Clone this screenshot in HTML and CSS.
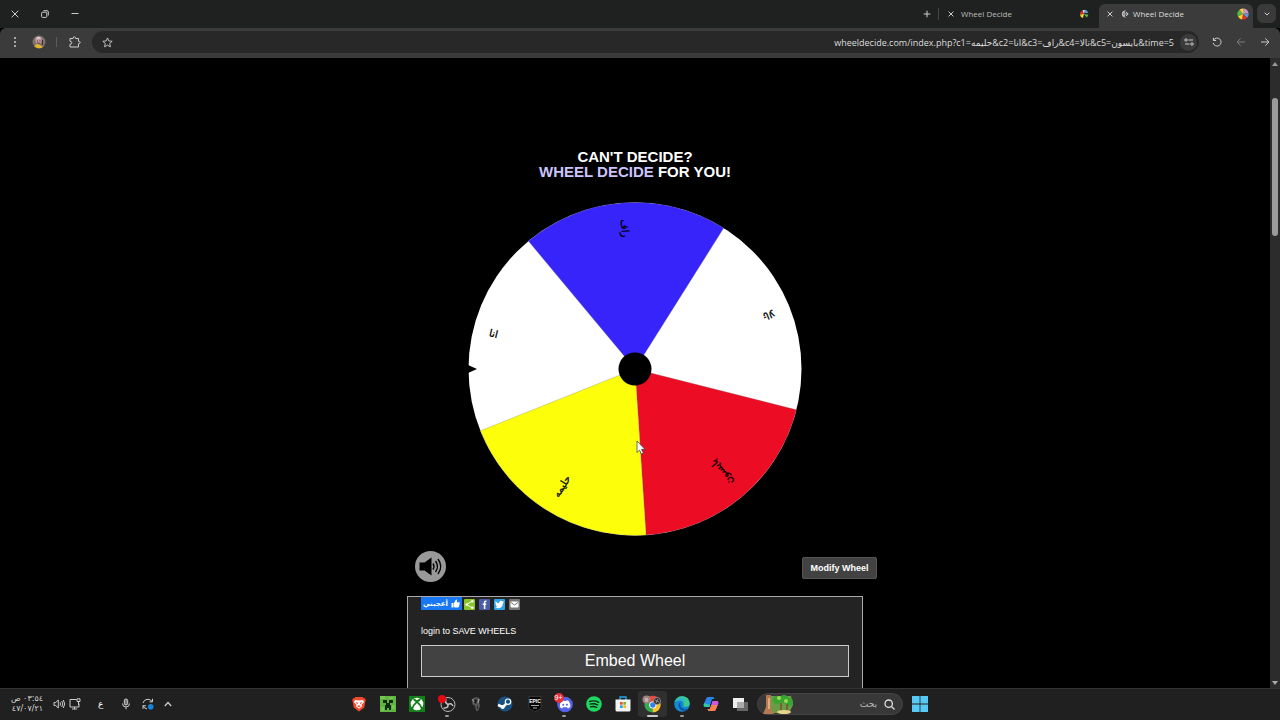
FILE: index.html
```html
<!DOCTYPE html>
<html lang="en">
<head>
    <meta charset="UTF-8">
    <meta name="viewport" content="width=device-width, initial-scale=1.0">
    <title>Wheel Decide</title>
    <link rel="stylesheet" href="styles.css">
</head>
<body>
    <!-- Tab strip -->
    <header class="tabstrip">
        <div class="window-buttons">
            <button aria-label="Close"><svg width="8" height="8" viewBox="0 0 8 8"><path d="M.7.7l6.600 6.600M7.300.7L.7 7.300"/></svg></button>
            <button aria-label="Restore"><svg width="8" height="8" viewBox="0 0 8 8"><rect x=".6" y="2.200" width="5.200" height="5.200" rx="1"/><path d="M2.500.7H6a1.300 1.300 0 0 1 1.300 1.300v3.500"/></svg></button>
            <button aria-label="Minimize"><svg width="8" height="8" viewBox="0 0 8 8"><path d="M.5 3.500h7"/></svg></button>
        </div>
        <div class="tabs">
            <button class="new-tab" aria-label="New tab"><svg width="8" height="8" viewBox="0 0 8 8"><path d="M4 .7v6.600M.7 4h6.600"/></svg></button>
            <div class="tab">
                <button aria-label="Close tab"><svg width="6" height="6" viewBox="0 0 6 6"><path d="M.6.6l4.800 4.800M5.400.6L.6 5.400"/></svg></button>
                <span class="tab-title">Wheel Decide</span>
                <svg class="favicon" width="10" height="10" viewBox="0 0 10 10">
                    <path class="f-red" d="M5 5L1 5A4 4 0 0 1 3 1.500z"/>
                    <path class="f-yellow" d="M5 5L1 5.500A4 4 0 0 0 4 9z"/>
                    <path class="f-white" d="M5 5L3.500 1.200A4 4 0 0 1 6 1z"/>
                    <path class="f-blue" d="M5 4L6 .8A4.500 4.500 0 0 1 9.300 4z"/>
                    <path class="f-green" d="M5 5l4.300.4A4.500 4.500 0 0 1 7.500 8.500z"/>
                </svg>
            </div>
            <div class="tab active">
                <button aria-label="Close tab"><svg width="6" height="6" viewBox="0 0 6 6"><path d="M.6.6l4.800 4.800M5.400.6L.6 5.400"/></svg></button>
                <svg class="line-icon" width="9" height="8" viewBox="0 0 9 8"><path d="M5.500.8A3.200 3.200 0 1 0 5.500 7.200M3 4h5M6 2l2.200 2L6 6M3 2.600h2M3 5.400h2"/></svg>
                <span class="tab-title">Wheel Decide</span>
                <svg class="favicon" width="12" height="12" viewBox="0 0 12 12">
                    <path class="f-green" d="M6 6L1 8.500A5.500 5.500 0 0 1 2.500 1.800z"/>
                    <path class="f-yellow" d="M6 6L2.500 1.800A5.500 5.500 0 0 1 6 .5z"/>
                    <path class="f-pink" d="M6 6V.5A5.500 5.500 0 0 1 11.500 5z"/>
                    <path class="f-blue" d="M6 6l5.500-1A5.500 5.500 0 0 1 10 10z"/>
                    <path class="f-red" d="M6 6l4 4A5.500 5.500 0 0 1 5 11.400z"/>
                    <path class="f-yellow" d="M6 6L5 11.400A5.500 5.500 0 0 1 1 8.500z"/>
                </svg>
            </div>
            <button class="tab-search" aria-label="Search tabs"><svg width="6" height="4" viewBox="0 0 6 4"><path d="M.7.7L3 3 5.300.7"/></svg></button>
        </div>
    </header>

    <!-- Address bar -->
    <nav class="toolbar">
        <button aria-label="Menu"><svg class="solid" width="4" height="12" viewBox="0 0 4 12"><circle cx="2" cy="2" r="1"/><circle cx="2" cy="6" r="1"/><circle cx="2" cy="10" r="1"/></svg></button>
        <button class="profile" aria-label="Profile">
            <svg width="14" height="14" viewBox="0 0 14 14">
                <circle cx="7" cy="7" r="6.500" fill="#82706f" stroke="none"/>
                <path d="M2.500 11.500Q4 8 7 9.500T11 12A6.500 6.500 0 0 1 2.500 11.500z" fill="#e0b52c" stroke="none"/>
                <circle cx="6.500" cy="5.500" r="3" fill="#c79aa0" stroke="none"/>
                <path d="M3 4.500Q6-.5 10 4L8.500 3.500H5z" fill="#ddd" stroke="none"/>
                <path d="M10.500 5v5M5 6h1M7.500 6h1M5.500 8h2" stroke="#38302f"/>
            </svg>
        </button>
        <span class="divider"></span>
        <button aria-label="Extensions"><svg width="12" height="12" viewBox="0 0 12 12"><path d="M1 2.500h3Q4 .8 5.300.8T6.600 2.500H9.500V5.300Q11.200 5.300 11.200 6.500T9.500 7.700V11H1V8.200Q2.800 8 2.800 6.700T1 5.200z"/></svg></button>
        <div class="omnibox">
            <button aria-label="Bookmark"><svg width="11" height="11" viewBox="0 0 12 12"><path d="M6 1l1.500 3.300 3.600.4-2.700 2.400.8 3.600L6 8.900l-3.200 1.800.8-3.600L.9 4.700l3.600-.4z"/></svg></button>
            <input type="text" dir="ltr" aria-label="Address" value="wheeldecide.com/index.php?c1=حليمه&amp;c2=انا&amp;c3=راف&amp;c4=تالا&amp;c5=بايسون&amp;time=5">
            <button class="site-info" aria-label="Site information"><svg width="10" height="8" viewBox="0 0 10 8"><circle cx="2" cy="2" r="1.200"/><path d="M4.500 2H9M1 6h4.500"/><circle cx="8" cy="6" r="1.200"/></svg></button>
        </div>
        <button aria-label="Reload"><svg width="10" height="10" viewBox="0 0 10 10"><path d="M1.500 3.300A4 4 0 1 1 1.200 6M1.400.8v2.700h2.700"/></svg></button>
        <button class="dim" aria-label="Forward"><svg width="10" height="10" viewBox="0 0 10 10"><path d="M9 5H1.200M4.700 1.400L1.100 5l3.600 3.600"/></svg></button>
        <button aria-label="Back"><svg width="10" height="10" viewBox="0 0 10 10"><path d="M1 5h7.800M5.300 1.400L8.900 5 5.300 8.600"/></svg></button>
    </nav>

    <!-- Page -->
    <div class="viewport">
        <main class="page">
            <h1>CAN'T DECIDE?<br><a href="#">WHEEL DECIDE</a> FOR YOU!</h1>

            <svg class="wheel" viewBox="-167 -167 334 334" role="img" aria-label="Wheel">
                <circle r="166.500" fill="#fff"/>
                <path class="slice" fill="#3624fb" d="M0 0L-106.600-127.900A166.500 166.500 0 0 1 88.700-140.900z"/>
                <path class="slice" fill="#ec0c24" d="M0 0L161.400 40.800A166.500 166.500 0 0 1 11 166.100z"/>
                <path class="slice" fill="#fdff0a" d="M0 0L11 166.100A166.500 166.500 0 0 1-154.600 61.800z"/>
                <circle r="16.500" fill="#000"/>
                <path d="M-167-4L-158 0L-167 4z" fill="#000"/>
                <text x="-150" y="4" transform="rotate(14.200)">انا</text>
                <text x="-150" y="4" transform="rotate(86.200)">راف</text>
                <text x="-150" y="4" transform="rotate(158.200)">تالا</text>
                <text x="-150" y="4" transform="rotate(230.200)">بايسون</text>
                <text x="-150" y="4" transform="rotate(302.200)">حليمه</text>
                <path class="cursor" d="M2 72v11.500l2.600-2.400 1.800 4 2-.9-1.800-3.900H10z"/>
            </svg>

            <div class="wheel-actions">
                <button class="sound" aria-label="Sound">
                    <svg width="31" height="31" viewBox="0 0 31 31">
                        <circle cx="15.500" cy="15.500" r="15.500" fill="#999"/>
                        <path d="M4.500 11.500h5l7-5v18l-7-5h-5z" fill="#000"/>
                        <path d="M18 12.500q2 3 0 6M20.500 10q4 5.500 0 11M23 8q5.500 7.500 0 15" fill="none" stroke="#000" stroke-width="1.400"/>
                    </svg>
                </button>
                <button class="modify">Modify Wheel</button>
            </div>

            <section class="panel">
                <div class="share">
                    <button class="like" dir="rtl"><svg width="9" height="9" viewBox="0 0 9 9"><path fill="#fff" d="M.5 4h2v4.500h-2zM3 4l2-3.500c1.300 0 1.300 1 .8 2.800h2.500c.6.2.6 1 .2 1.300.3.500.2 1-.2 1.200.2.600 0 1-.3 1.200.1.700-.2 1.500-1 1.500H4L3 8z"/></svg><span>أعجبني</span></button>
                    <a class="share-green" href="#" aria-label="Share"><svg width="11" height="11" viewBox="0 0 11 11"><path d="M8.500 2L2.500 5.500l6 3.500" fill="none" stroke="#fff"/><g fill="#fff"><circle cx="8.300" cy="2.200" r="1.300"/><circle cx="2.700" cy="5.500" r="1.300"/><circle cx="8.300" cy="8.800" r="1.300"/></g></svg></a>
                    <a class="share-facebook" href="#" aria-label="Facebook"><svg width="11" height="11" viewBox="0 0 11 11"><path d="M7.500 2.200H6.600q-1 0-1 1V10M3.700 5.300h3.500" fill="none" stroke="#fff" stroke-width="1.500"/></svg></a>
                    <a class="share-twitter" href="#" aria-label="Twitter"><svg width="11" height="11" viewBox="0 0 11 11"><path fill="#fff" d="M1.500 2.200q1.700 1.900 3.800 2c-.3-2.600 2.200-3 3.100-1.700l1.300-.4-.7 1.200.9-.1-1 1C9 8.300 4.800 10.500 1.200 8.500q1.500 0 2.300-.8-1.300-.2-1.600-1.300h.8Q1.400 5.900 1.400 4.500l.7.200Q.9 3.500 1.500 2.200z"/></svg></a>
                    <a class="share-mail" href="#" aria-label="Email"><svg width="11" height="11" viewBox="0 0 11 11"><rect x="1.500" y="2.500" width="8" height="6" rx="1" fill="#fff"/><path d="M2 3.500l3.500 2.500L9 3.500" fill="none" stroke="#777"/></svg></a>
                </div>
                <p class="login"><a href="#">login</a> to SAVE WHEELS</p>
                <button class="embed">Embed Wheel</button>
            </section>
        </main>
        <div class="scrollbar" aria-hidden="true">
            <span class="arrow-up"></span>
            <span class="thumb"></span>
            <span class="arrow-down"></span>
        </div>
    </div>

    <!-- Taskbar -->
    <footer class="taskbar">
        <div class="tray">
            <time class="clock" dir="rtl">٠٣:٥٤ ص<br>٤٧/٠٧/٢١</time>
            <svg width="12" height="12" viewBox="0 0 12 12"><path d="M1 4.500h1.700L5.300 2v8L2.700 7.500H1zM7 4.300q1.200 1.700 0 3.400M8.700 3q2.200 3 0 6M10.300 2q2.800 4 0 8"/></svg>
            <svg class="network" width="12" height="12" viewBox="0 0 12 12"><path d="M7.500 1.500H1v7.500h9V5.500M3 11h5M5.500 9v2M9.500 3.500V7M8 .8h3v2.700H8z"/></svg>
            <span class="language">ع</span>
            <svg width="12" height="12" viewBox="0 0 12 12"><rect x="4.300" y="1" width="3.400" height="6" rx="1.700" fill="#777"/><path d="M2.500 5.500q0 3.500 3.500 3.500t3.500-3.500M6 9v2.300"/></svg>
            <svg class="update" width="12" height="12" viewBox="0 0 12 12"><path d="M1 5A5 5 0 0 1 10 3.500M10.500.8v3h-3M1 7.500a5 5 0 0 0 4 3.400M1 10.800v-3h3"/><circle cx="8.700" cy="8.700" r="2.800" fill="#1683d8" stroke="none"/></svg>
            <svg width="8" height="12" viewBox="0 0 8 12"><path d="M.8 8L4 4.500 7.200 8" stroke-width="1.300"/></svg>
        </div>

        <div class="dock">
            <div class="apps">
                <button aria-label="Brave"><svg width="16" height="16" viewBox="0 0 16 16"><path fill="#f4482c" d="M4.500 1h7l1.300 1.300 1.200-.1.800 2.500-.6 1.500-.9 5.300L8 15.500l-5.300-4-.9-5.300-.6-1.500.8-2.500 1.200.1z"/><path fill="#fff" d="M4 4l4 .6L12 4l1 2.200-2.500 2.600.5 1.500-3 2.500-3-2.500.5-1.500L3 6.200z"/><path fill="#f4482c" d="M4.500 6l2.500.8-.5 1.700zM11.500 6L9 6.800l.5 1.700zM6 10l2-.8 2 .8-2 1.300z"/></svg></button>
                <button aria-label="Minecraft"><svg width="16" height="16" viewBox="0 0 16 16"><path fill="#62b545" d="M0 0h16v16H0z"/><path fill="#75c84f" d="M0 0h5v3H0zM9 1h4v2H9zM1 11h3v4H1zM12 9h3v4h-3z"/><path fill="#102b10" d="M3 4h4v3H3zM9 4h4v3H9zM6 7h4v2h1v5H9v-2H7v2H5V9h1z"/></svg></button>
                <button aria-label="Xbox"><svg width="16" height="16" viewBox="0 0 16 16"><path fill="#118018" d="M0 0h16v16H0z"/><circle cx="8" cy="8" r="6.300" fill="#fff"/><path fill="none" stroke="#118018" stroke-width="1.600" d="M3 13.500Q4 9 8 5.800q4 3.200 5 7.700"/><path fill="#118018" d="M4 2.500Q6 2.500 8 4.200 10 2.500 12 2.500L11 5 8 6.500 5 5z"/></svg></button>
                <button class="running" aria-label="OBS"><svg width="20" height="18" viewBox="0 0 20 18"><circle cx="11" cy="9.500" r="7" fill="#202022" stroke="#b9b9b9"/><path d="M11 9.500Q7.500 8 9 4.300M11 9.500q.5 3.800-4.500 3.500M11 9.500q3-2.300 5 1.500" fill="none" stroke="#c6c6c6" stroke-width="1.500"/><circle cx="5" cy="4" r="4" fill="#e50914"/></svg></button>
                <button aria-label="Game"><svg width="12" height="16" viewBox="0 0 12 16"><path fill="#555" d="M3 2l4-1 3 2-1 3 1 4-2 5H6L5 10 2 8z"/><path fill="#171717" d="M5 3l2 1-1 4-2-2zM7 9l1 2-1 3z"/><path d="M2 3l2 3M9 3l-1 4" fill="none" stroke="#aaa"/></svg></button>
                <button aria-label="Steam"><svg width="16" height="16" viewBox="0 0 16 16"><circle cx="8" cy="8" r="7.500" fill="#175182"/><path d="M1 9l5 2 5-5" fill="none" stroke="#fff" stroke-width="2.500"/><circle cx="11" cy="5.700" r="2.700" fill="#175182" stroke="#fff" stroke-width="1.200"/><circle cx="5.700" cy="11" r="2" fill="#fff"/></svg></button>
                <button aria-label="Epic Games"><svg width="14" height="16" viewBox="0 0 14 16"><path fill="#050505" stroke="#555" stroke-width=".5" d="M1 .5h12v12L7 15.500l-6-3z"/><text x="7" y="7" class="epic-name">EPIC</text><path d="M3 9.500h8M5 12h4" stroke="#aaa"/></svg></button>
                <button class="running" aria-label="Discord"><svg width="18" height="18" viewBox="0 0 18 18"><circle cx="10" cy="9.500" r="7.800" fill="#5662e8"/><path fill="#fff" d="M6.500 6l2-.8.600.8h2l.6-.8 2 .8q2 3 1.700 6l-2.500 1.400-.8-1.200H8l-.8 1.200L4.800 12Q4.500 9 6.500 6z"/><g fill="#5662e8"><circle cx="8.300" cy="9.700" r="1"/><circle cx="11.900" cy="9.700" r="1"/></g></svg><span class="badge">9+</span></button>
                <button aria-label="Spotify"><svg width="16" height="16" viewBox="0 0 16 16"><circle cx="8" cy="8" r="7.800" fill="#20d760"/><path d="M3.500 5.500q5-1.400 9.300.8M4 8.200q4.300-1.200 7.800.8M4.500 10.800q3.500-.9 6.300.7" fill="none" stroke="#102b18" stroke-width="1.300" stroke-linecap="round"/></svg></button>
                <button aria-label="Microsoft Store"><svg width="16" height="16" viewBox="0 0 16 16"><path d="M5 4V1h6v3" fill="none" stroke="#21a7ed" stroke-width="1.300"/><path fill="#f1f3f5" d="M.5 3.500h15V14q0 1.500-1.500 1.500H2Q.5 15.500.5 14z"/><path fill="#ef512f" d="M5 6h2.700v2.700H5z"/><path fill="#79b928" d="M8.300 6H11v2.700H8.300z"/><path fill="#20a3ec" d="M5 9.300h2.700V12H5z"/><path fill="#f7b719" d="M8.300 9.300H11V12H8.300z"/></svg></button>
                <button class="running current" aria-label="Chrome"><svg width="20" height="18" viewBox="0 0 20 18"><path fill="#e6483b" d="M10.500 9L3.500 6A7.500 7.500 0 0 1 18 7z"/><path fill="#fac32d" d="M10.500 9l7.300-2.500A7.600 7.600 0 0 1 10 17.300z"/><path fill="#36a852" d="M10.500 9l.3 8.300A7.600 7.600 0 0 1 3.500 6z"/><circle cx="10.800" cy="10" r="3.600" fill="#fff"/><circle cx="10.800" cy="10" r="2.700" fill="#3180ed"/><circle cx="4.500" cy="4.500" r="4" fill="#9a8380"/><path d="M2.500 4q2-3 4 0l-1 3h-2z" fill="#c7b3b1"/><circle cx="15" cy="6" r="3.500" fill="#292929" stroke="#aaa" stroke-width=".7"/><path d="M13 5l4 2M16 4l-2 4" stroke="#999"/></svg></button>
                <button class="running" aria-label="Edge"><svg width="16" height="16" viewBox="0 0 16 16"><circle cx="8" cy="8" r="7.800" fill="#1689d5"/><path fill="#3bc98c" d="M.5 6Q3-.3 9 .3q6 .7 6.800 7Q15.500 11 11 10.800q-2-.2-1.500-1.500Q10.500 5 6 4.500 2.500 4 .5 6z"/><path fill="#2db1e2" d="M.5 6Q4 1 9 2.500q2.300 1 2 3.500Q6.500 2.500.5 6z"/><path fill="#0c55a4" d="M5 7q-2 5 3 7.500 3.500 1 6-2Q8.500 14 6.500 10q-.6-2 .5-3.500z"/></svg></button>
                <button aria-label="Copilot"><svg width="16" height="16" viewBox="0 0 16 16"><path fill="#2684ed" d="M5 1h5q1 0 1.500 2H9L6.500 11H2Q0 11 .8 8L3 3q.5-2 2-2z"/><path fill="#35c69c" d="M1 7l-.3 2q0 2 2 2h3.800L7 9z"/><path fill="#c75be1" d="M11 15H6q-1 0-1.500-2H7l2.500-8H14q2 0 1.200 3L13 13q-.5 2-2 2z"/><path fill="#f58349" d="M4.500 13H7l1.200-4h6.500L13 13q-.5 2-2 2H6q-1 0-1.500-2z"/></svg></button>
                <button aria-label="Task view"><svg width="17" height="15" viewBox="0 0 17 15"><path fill="#666" d="M5 5h11v9H5z"/><path fill="#eee" d="M1 1h11v10H1z"/><path fill="#aaa" d="M5 5h7v6H5z"/></svg></button>
            </div>
            <div class="search">
                <svg width="31" height="19" viewBox="0 0 31 19">
                    <path fill="#699c45" d="M9 1h20l2 9-4 8H7z"/>
                    <path fill="#b77952" d="M4 0h5v13l3 6H1l3-7z"/>
                    <path fill="#e0ab80" d="M6 3h2v11H6z"/>
                    <g fill="#36a631"><circle cx="15" cy="5" r="4"/><circle cx="22" cy="4" r="4"/><circle cx="27" cy="7" r="4"/></g>
                    <g fill="#a0d850"><circle cx="17" cy="3" r="2"/><circle cx="24" cy="6" r="2"/></g>
                    <path d="M19 8v7M25 9v6" stroke="#79502f" stroke-width="1.500"/>
                    <ellipse cx="22" cy="17" rx="7" ry="2" fill="#e5d58c"/>
                </svg>
                <input type="search" dir="rtl" placeholder="بحث" aria-label="بحث">
                <svg width="11" height="11" viewBox="0 0 11 11"><circle cx="4.700" cy="4.700" r="3.700" fill="none" stroke="#ddd" stroke-width="1.300"/><path d="M7.500 7.500l3 3" stroke="#ddd" stroke-width="1.300"/></svg>
            </div>
            <button class="start" aria-label="Start"><svg width="16" height="16" viewBox="0 0 16 16"><path fill="#58c9f5" d="M0 0h7.600v7.600H0zM8.400 0H16v7.600H8.400zM0 8.400h7.600V16H0zM8.400 8.400H16V16H8.400z"/></svg></button>
        </div>
    </footer>
</body>
</html>
```

FILE: styles.css
```css
/* Global */
* {
    box-sizing: border-box;
}
body {
    margin: 0;
    height: 100vh;
    display: flex;
    flex-direction: column;
    overflow: hidden;
    background: #000;
    color: #fff;
    font-family: "Liberation Sans", Arial, "DejaVu Sans", sans-serif;
}
button {
    display: flex;
    align-items: center;
    justify-content: center;
    padding: 0;
    border: 0;
    background: none;
    color: inherit;
    font-family: inherit;
    cursor: pointer;
}
input {
    min-width: 0;
    padding: 0;
    border: 0;
    outline: 0;
    background: none;
    color: inherit;
}
svg {
    display: block;
    flex: none;
}

/* Tab strip */
.tabstrip {
    display: flex;
    flex: none;
    justify-content: space-between;
    height: 28px;
    padding: 0 4px 0 0;
    background: #1f2120;
}
.tabstrip svg,
.toolbar svg,
.tray svg {
    fill: none;
    stroke: #ccc;
}
.window-buttons {
    display: flex;
    padding-bottom: 1px;
}
.window-buttons button {
    width: 30px;
}
.tabs {
    display: flex;
    align-items: center;
    padding-bottom: 1px;
}
.new-tab {
    width: 23px;
}
.tab {
    display: flex;
    align-items: center;
    gap: 7px;
    width: 161px;
    height: 12px;
    padding: 0 10px 0 9px;
    border-left: 1px solid #444;
    color: #bbb;
    font-family: "Open Sans", sans-serif;
    font-size: 8px;
}
.tab-title {
    flex: 1;
}
.tab.active {
    align-self: flex-end;
    gap: 4px;
    width: 154px;
    height: 24px;
    margin-bottom: -1px;
    padding: 0 4px 5px 8px;
    border: 0;
    border-radius: 6px 6px 0 0;
    background: #3b3b3b;
    color: #ddd;
}
.tab.active .line-icon {
    margin-left: 3px;
}
.tab .favicon {
    stroke: none;
}
.f-red { fill: #e9292b; }
.f-yellow { fill: #f5d62d; }
.f-white { fill: #eee; }
.f-blue { fill: #6298d8; }
.f-green { fill: #5bb63d; }
.f-pink { fill: #cf94be; }
.tab-search {
    width: 19px;
    height: 19px;
    margin-left: 4px;
    border-radius: 6px;
    background: #3a3a3a;
}

/* Toolbar */
.toolbar {
    display: flex;
    flex: none;
    align-items: center;
    height: 30px;
    padding: 0 3px 2px 0;
    border-radius: 6px 6px 0 0;
    background: #3b3b3b;
}
.toolbar > button {
    width: 24px;
}
.toolbar > button:first-child {
    width: 29px;
}
.toolbar > .profile {
    width: 20px;
}
.toolbar .solid {
    fill: #ccc;
    stroke: none;
}
.toolbar .dim {
    opacity: 0.45;
}
.divider {
    width: 1px;
    height: 10px;
    margin: 0 6px 0 7px;
    background: #5b5b5b;
}
.omnibox {
    display: flex;
    flex: 1;
    align-items: center;
    height: 22px;
    margin: 0 6px 0 5px;
    padding: 0 2px 0 10px;
    border-radius: 11px;
    background: #282828;
}
.omnibox input {
    flex: 1;
    margin-right: 6px;
    color: #ddd;
    font-family: "Open Sans", "DejaVu Sans", sans-serif;
    font-size: 9px;
    text-align: right;
}
.site-info {
    width: 17px;
    height: 17px;
    border-radius: 50%;
    background: #3b3b3b;
}

/* Page */
.viewport {
    display: flex;
    flex: 1;
    min-height: 0;
    overflow: hidden;
}
.page {
    display: flex;
    flex: 1;
    flex-direction: column;
    align-items: center;
    padding-top: 91px;
}
h1 {
    margin: 0;
    font-size: 15px;
    line-height: 15px;
    text-align: center;
}
h1 a {
    color: #ccc4fc;
    text-decoration: none;
}
.wheel {
    width: 334px;
    height: 334px;
    margin: 23px 0 15px;
}
.wheel .slice {
    stroke: #777;
    stroke-width: 0.3px;
}
.wheel text {
    font-family: "DejaVu Sans", sans-serif;
    font-size: 10px;
    stroke: #000;
    stroke-width: 0.3px;
}
.wheel .cursor {
    fill: #fff;
    stroke: #333;
    stroke-width: 0.7px;
}
.wheel-actions {
    display: flex;
    align-items: center;
    justify-content: space-between;
    width: 462px;
    margin: 0 0 14px 22px;
}
.modify {
    width: 75px;
    height: 22px;
    margin-top: 3px;
    border: 1px solid #555;
    border-radius: 2px;
    background: #424242;
    font-size: 9px;
    font-weight: bold;
}
.panel {
    flex: 1;
    width: 456px;
    padding: 0 13px;
    border: 1px solid #aaa;
    border-bottom: 0;
    background: #232323;
}
.share {
    display: flex;
    align-items: flex-end;
    gap: 4px;
    height: 13px;
}
.share a {
    border-radius: 1px;
}
.like {
    gap: 3px;
    width: 41px;
    height: 13px;
    margin-right: -2px;
    background: #1877f2;
    font-family: "DejaVu Sans", sans-serif;
    font-size: 7px;
    font-weight: bold;
    line-height: 12px;
}
.share-green { background: #88c526; }
.share-facebook { background: #4b5ca7; }
.share-twitter { background: #31a4e7; }
.share-mail { background: #777; }
.login {
    margin: 15px 0 8px;
    font-size: 9px;
    line-height: 12px;
}
.login a {
    color: inherit;
    text-decoration: none;
}
.embed {
    width: 100%;
    height: 32px;
    border: 1px solid #ccc;
    background: #424242;
    font-size: 16px;
}

/* Scrollbar */
.scrollbar {
    display: flex;
    flex: none;
    flex-direction: column;
    align-items: center;
    width: 10px;
    padding: 4px 0 3px;
    background: #2c2c2c;
}
.arrow-up,
.arrow-down {
    border: 3px solid transparent;
}
.arrow-up {
    border-top: 0;
    border-bottom: 4px solid #999;
}
.arrow-down {
    margin-top: auto;
    border-bottom: 0;
    border-top: 4px solid #aaa;
}
.thumb {
    width: 6px;
    height: 138px;
    margin-top: 32px;
    border-radius: 3px;
    background: #9b9b9b;
}

/* Taskbar */
.taskbar {
    display: grid;
    grid-template-columns: 1fr auto 1fr;
    align-items: center;
    flex: none;
    height: 32px;
    padding-bottom: 1px;
    border-top: 1px solid #333;
    background: #202020;
}
.tray {
    display: flex;
    align-items: center;
    padding-left: 11px;
}
.clock {
    width: 32px;
    margin-right: 10px;
    color: #ddd;
    font-family: "DejaVu Sans", sans-serif;
    font-size: 8px;
    line-height: 10px;
    text-align: right;
    white-space: nowrap;
}
.network {
    margin-left: 4px;
}
.language {
    margin: 0 17px;
    font-family: "DejaVu Sans", sans-serif;
    font-size: 9px;
}
.update {
    margin: 0 10px;
}
.dock {
    display: flex;
    align-items: center;
}
.apps {
    display: grid;
    grid-template-columns: repeat(14, 1fr);
    width: 411px;
    margin-right: 2px;
}
.apps button {
    position: relative;
    height: 26px;
}
.apps .current {
    border-radius: 3px;
    background: #303030;
}
.running::after {
    content: "";
    position: absolute;
    bottom: 0;
    width: 4px;
    height: 2px;
    border-radius: 1px;
    background: #999;
}
.running.current::after {
    width: 11px;
    background: #ccc;
}
.badge {
    position: absolute;
    top: 2px;
    left: 4px;
    width: 10px;
    height: 10px;
    border-radius: 50%;
    background: #e2303d;
    font-size: 7px;
    line-height: 10px;
}
.epic-name {
    fill: #fff;
    font-size: 5px;
    font-weight: bold;
    text-anchor: middle;
}
.search {
    display: flex;
    align-items: center;
    gap: 7px;
    width: 146px;
    height: 22px;
    padding: 0 7px 0 4px;
    border: 1px solid #444;
    border-radius: 11px;
    background: #383838;
}
.search input {
    flex: 1;
    font-family: "DejaVu Sans", sans-serif;
    font-size: 9px;
}
.search input::placeholder {
    color: #bbb;
    opacity: 1;
}
.start {
    width: 33px;
    height: 28px;
}
```
